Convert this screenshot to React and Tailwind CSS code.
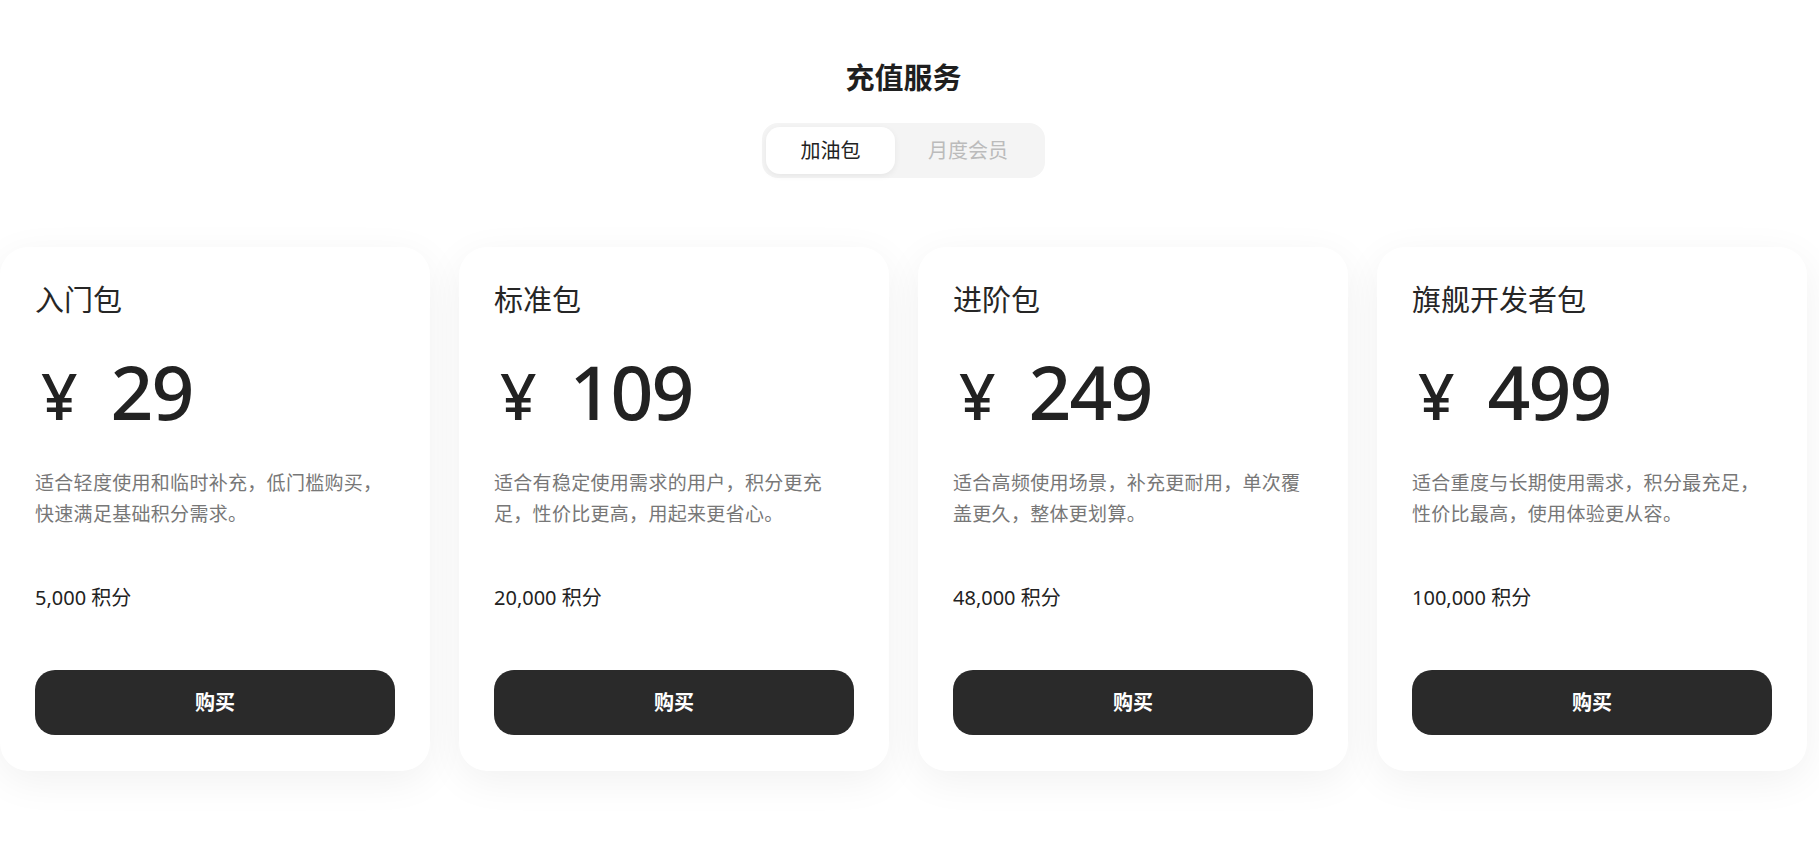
import React, { useState } from "react";

const packs = [
  {
    name: "入门包",
    price: "29",
    desc: "适合轻度使用和临时补充，低门槛购买，快速满足基础积分需求。",
    points: "5,000 积分",
  },
  {
    name: "标准包",
    price: "109",
    desc: "适合有稳定使用需求的用户，积分更充足，性价比更高，用起来更省心。",
    points: "20,000 积分",
  },
  {
    name: "进阶包",
    price: "249",
    desc: "适合高频使用场景，补充更耐用，单次覆盖更久，整体更划算。",
    points: "48,000 积分",
  },
  {
    name: "旗舰开发者包",
    price: "499",
    desc: "适合重度与长期使用需求，积分最充足，性价比最高，使用体验更从容。",
    points: "100,000 积分",
  },
];

const PackCard = ({ pack }) => {
  return (
    <div className="w-[430px] shrink-0 bg-white rounded-[28px] shadow-[0_10px_40px_rgba(0,0,0,0.06)] pt-[36px] px-[35px] pb-[36px]">
      {/* Name */}
      <h3 className="text-[29px] leading-[34px] text-[#262626]">{pack.name}</h3>

      {/* Price */}
      <div className="flex items-baseline mt-[37px] h-[76px] text-[#222]">
        <span className="text-[64px] leading-none font-medium ml-[6px] mr-[33px]">¥</span>
        <span className="text-[75px] leading-none font-medium tracking-[-2px]">
          {pack.price}
        </span>
      </div>

      {/* Description */}
      <p className="mt-[38px] text-[19px] leading-[31px] tracking-[0.3px] text-[#777] h-[62px]">
        {pack.desc}
      </p>

      {/* Points */}
      <p className="mt-[54px] text-[20px] leading-[28px] text-[#222]">
        {pack.points}
      </p>

      {/* Action */}
      <button className="mt-[58px] w-full h-[65px] rounded-[20px] bg-[#2a2a2a] text-white text-[20px] font-bold">
        购买
      </button>
    </div>
  );
};

export default function App() {
  const [tab, setTab] = useState("fuel");

  return (
    <div
      className="min-h-screen bg-white overflow-hidden"
      style={{ fontFamily: '"Noto Sans", "Noto Sans CJK SC", sans-serif' }}
    >
      <div className="w-[1807px] flex flex-col items-center pt-[58px] pb-[90px]">
        {/* Header */}
        <h1 className="text-[29px] leading-[40px] font-bold text-[#1f1f1f]">
          充值服务
        </h1>

        {/* Tabs */}
        <div className="mt-[25px] h-[55px] p-[4px] flex bg-[#f4f4f4] rounded-[16px]">
          <button
            onClick={() => setTab("fuel")}
            className={
              tab === "fuel"
                ? "w-[129px] h-[47px] rounded-[14px] bg-white shadow-[0_2px_6px_rgba(0,0,0,0.06)] text-[20px] text-[#222]"
                : "w-[129px] h-[47px] rounded-[14px] text-[20px] text-[#bbbbbb]"
            }
          >
            加油包
          </button>
          <button
            onClick={() => setTab("monthly")}
            className={
              tab === "monthly"
                ? "w-[146px] h-[47px] rounded-[14px] bg-white shadow-[0_2px_6px_rgba(0,0,0,0.06)] text-[20px] text-[#222]"
                : "w-[146px] h-[47px] rounded-[14px] text-[20px] text-[#bbbbbb]"
            }
          >
            月度会员
          </button>
        </div>

        {/* Cards */}
        <div className="mt-[69px] w-full flex gap-[29px]">
          {packs.map((pack) => (
            <PackCard key={pack.name} pack={pack} />
          ))}
        </div>
      </div>
    </div>
  );
}
